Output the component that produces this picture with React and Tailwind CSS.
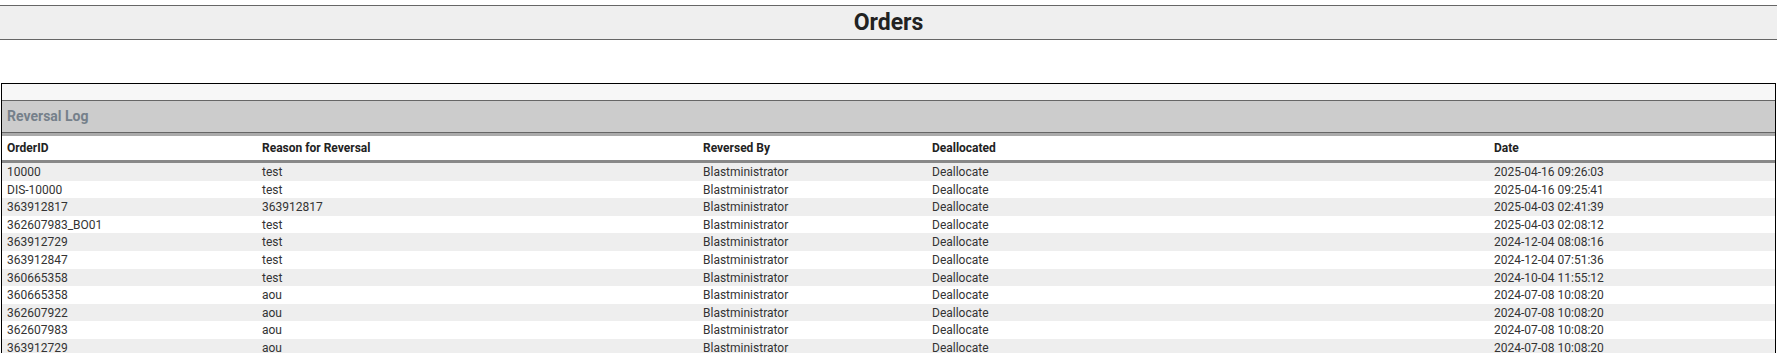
import React from 'react';

const rows = [
    ['10000', 'test', '2025-04-16 09:26:03'],
    ['DIS-10000', 'test', '2025-04-16 09:25:41'],
    ['363912817', '363912817', '2025-04-03 02:41:39'],
    ['362607983_BO01', 'test', '2025-04-03 02:08:12'],
    ['363912729', 'test', '2024-12-04 08:08:16'],
    ['363912847', 'test', '2024-12-04 07:51:36'],
    ['360665358', 'test', '2024-10-04 11:55:12'],
    ['360665358', 'aou', '2024-07-08 10:08:20'],
    ['362607922', 'aou', '2024-07-08 10:08:20'],
    ['362607983', 'aou', '2024-07-08 10:08:20'],
    ['363912729', 'aou', '2024-07-08 10:08:20'],
    ['363912847', 'aou', '2024-07-08 10:08:20'],
];

const cols = 'grid grid-cols-[255px_441px_229px_562px_1fr]';

const App = () => {
    return (
        <div className="w-[1777px] h-[353px] overflow-hidden bg-white font-['Roboto',sans-serif]">
            {/* Page title */}
            <div className="mt-[5px] h-[35px] border-y border-[#666] bg-[#efefef] flex items-center justify-center">
                <h1 className="text-[23px] font-bold text-[#222] leading-none">Orders</h1>
            </div>

            {/* Reversal log panel */}
            <div className="mt-[43px] ml-[1px] w-[1775px] border border-black">
                <div className="h-[16px] bg-[#f7f7f7]" />
                <div className="h-[33px] border-y border-[#666] bg-[#cccccc] flex items-center px-[5px]">
                    <span className="text-[14px] font-bold text-[#75808a]">Reversal Log</span>
                </div>

                <div className={`${cols} h-[30px] border-t-[3px] border-b-[3px] border-t-[#aaa] border-b-[#888] bg-white items-center`}>
                    {['OrderID', 'Reason for Reversal', 'Reversed By', 'Deallocated', 'Date'].map(h => (
                        <div key={h} className="px-[5px] text-[12px] font-bold text-[#222]">{h}</div>
                    ))}
                </div>

                {rows.map(([id, reason, date], i) => (
                    <div key={i} className={`${cols} h-[17.6px] items-center text-[12px] text-[#333] ${i % 2 === 0 ? 'bg-[#eeeeee]' : 'bg-white'}`}>
                        <div className="px-[5px]">{id}</div>
                        <div className="px-[5px]">{reason}</div>
                        <div className="px-[5px]">Blastministrator</div>
                        <div className="px-[5px]">Deallocate</div>
                        <div className="px-[5px]">{date}</div>
                    </div>
                ))}
            </div>
        </div>
    );
};

export default App;
